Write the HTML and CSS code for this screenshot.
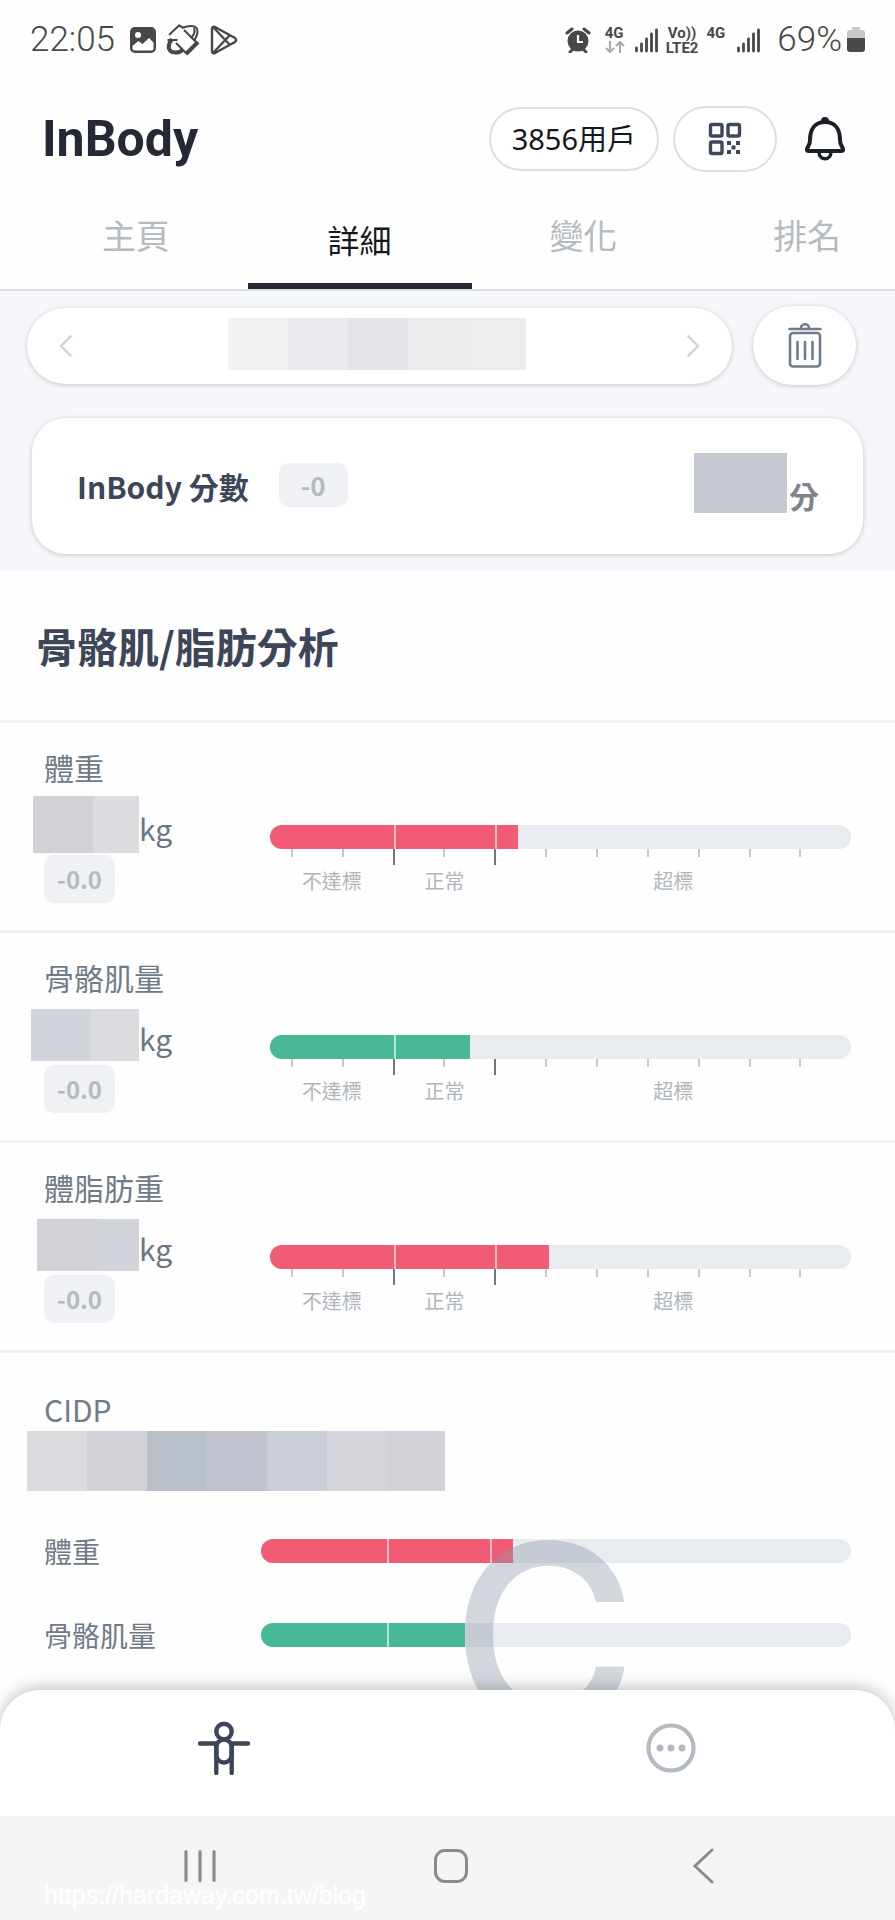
FILE: index.html
```html
<!DOCTYPE html>
<html lang="zh-Hant">
<head>
<meta charset="utf-8">
<meta name="viewport" content="width=device-width, initial-scale=1">
<title>InBody</title>
<link rel="stylesheet" href="styles.css">
</head>
<body>
<div class="app">
  <header class="top">
    <div class="status">
      <div class="status-side">
        <time class="clock">22:05</time>
        <svg class="status-icon" width="26" height="26" viewBox="0 0 26 26" aria-hidden="true"><rect width="26" height="26" rx="5" fill="#484848"/><circle cx="8" cy="8" r="3" fill="#fff"/><path d="M2.500 19l6-5 4 3 6.500-6 4.500 4.500v6q0 2-2 2h-17q-2 0-2-2z" fill="#fff"/></svg>
        <svg class="status-icon" width="34" height="34" viewBox="0 0 34 34" fill="none" stroke="#484848" aria-hidden="true"><path d="M3 12L13 2.500l4 2" stroke-width="2"/><path d="M1.500 17h10" stroke-width="2"/><path d="M6 16c-6 8-3 14 4 13.500 3 0 5-1 6.500-2.500" stroke-width="4"/><path d="M16 5c8-3 16-3 15.500 4 0 3-1 5-3 8" stroke-width="2"/><path d="M28 5c2 5-1 8-3 10" stroke-width="2"/><path d="M18 7l14 14M10 20l11 11" stroke-width="2"/><path d="M32 19L20 31" stroke-width="4"/></svg>
        <svg class="status-icon" width="28" height="30" viewBox="0 0 28 30" fill="none" stroke="#484848" stroke-width="2.400" stroke-linejoin="round" aria-hidden="true"><path d="M2 4q0-3 3-2l20 11q2 2 0 4L5 28q-3 1-3-2zM3 2l17 18M3 28l17-18"/></svg>
      </div>
      <div class="status-side status-right">
        <svg class="alarm" width="26" height="26" viewBox="0 0 26 26" aria-hidden="true"><circle cx="13" cy="14" r="10.500" fill="#484848"/><path d="M2 6l5-4M24 6l-5-4M5 25l3-3M21 25l-3-3" stroke="#484848" stroke-width="3" stroke-linecap="round"/><path d="M13 8v7h5" fill="none" stroke="#fff" stroke-width="2.200"/></svg>
        <div class="network"><span>4G</span><svg width="20" height="12" viewBox="0 0 20 12" fill="none" stroke="#a9a9a9" stroke-width="2" aria-hidden="true"><path d="M5 0v11M1 7l4 4 4-4M15 12V1M11 5l4-4 4 4"/></svg></div>
        <svg width="23" height="25" viewBox="0 0 23 25" stroke="#484848" stroke-width="2.800" stroke-linecap="round" aria-hidden="true"><path d="M1.500 20v3M6.500 16v7M11.500 11v12M16.500 6v17M21.500 2v21"/></svg>
        <div class="network network-volte"><span>Vo))</span><span>LTE2</span></div>
        <div class="network"><span>4G</span></div>
        <svg class="signal-second" width="23" height="25" viewBox="0 0 23 25" stroke="#484848" stroke-width="2.800" stroke-linecap="round" aria-hidden="true"><path d="M1.500 20v3M6.500 16v7M11.500 11v12M16.500 6v17M21.500 2v21"/></svg>
        <span class="clock">69%</span>
        <svg class="battery" width="18" height="26" viewBox="0 0 18 26" aria-hidden="true"><path d="M5 0h8v3h2q3 0 3 3v6H0V6q0-3 3-3h2z" fill="#c8c8c8"/><path d="M0 11h18v11q0 3-3 3H3q-3 0-3-3z" fill="#484848"/></svg>
      </div>
    </div>
    <div class="brand-bar">
      <a class="logo" href="#">InBody</a>
      <div class="actions">
        <button class="pill user-pill" type="button">3856用戶</button>
        <button class="pill qr-pill" type="button" aria-label="QR code"><svg width="34" height="34" viewBox="0 0 34 34" aria-hidden="true"><g fill="none" stroke="#3f475c" stroke-width="3.400"><rect x="2.500" y="2.500" width="11.500" height="11.500" rx="1.500"/><rect x="20" y="2.500" width="11.500" height="11.500" rx="1.500"/><rect x="2.500" y="20" width="11.500" height="11.500" rx="1.500"/></g><path d="M19 19h4v4h-4zM28 19h4v4h-4zM23.500 23.500h4v4h-4zM19 28h4v4h-4zM28 28h4v4h-4z" fill="#3f475c"/></svg></button>
        <button class="bell" type="button" aria-label="通知"><svg width="40" height="44" viewBox="0 0 40 44" fill="none" stroke="#1b1f27" stroke-width="4" stroke-linejoin="round" aria-hidden="true"><path d="M5 23c0-11 5-18 15-18s15 7 15 18c0 6 3 6 3 10q0 1-2 1H4q-2 0-2-1c0-4 3-4 3-10z"/><path d="M14 35c0 9 12 9 12 0" stroke-width="3.400"/><path d="M17 4c0-4 6-4 6 0z" fill="#1b1f27" stroke-width="2"/></svg></button>
      </div>
    </div>
    <nav class="tabs">
      <a class="tab" href="#">主頁</a>
      <a class="tab tab-active" href="#" aria-current="page">詳細</a>
      <a class="tab" href="#">變化</a>
      <a class="tab" href="#">排名</a>
    </nav>
  </header>

  <main class="content">
    <section class="summary">
      <div class="date-row">
        <div class="date-picker">
          <button class="arrow" type="button" aria-label="上一筆"><svg width="14" height="24" viewBox="0 0 14 24" fill="none" stroke="#d2d2d2" stroke-width="2.400"><path d="M12.500 1.500L2 12l10.500 10.500"/></svg></button>
          <div class="mosaic mosaic-date"><i class="tone-1"></i><i class="tone-2"></i><i class="tone-3"></i><i class="tone-4"></i><i class="tone-5"></i></div>
          <button class="arrow" type="button" aria-label="下一筆"><svg width="14" height="24" viewBox="0 0 14 24" fill="none" stroke="#d2d2d2" stroke-width="2.400"><path d="M1.500 1.500L12 12 1.500 22.500"/></svg></button>
        </div>
        <button class="trash" type="button" aria-label="刪除"><svg width="34" height="45" viewBox="0 0 34 45" fill="none" stroke="#6f7c89" stroke-width="2.600" stroke-linecap="round" aria-hidden="true"><path d="M1.500 6h31M13 5c0-5 8-5 8 0"/><rect x="2" y="10" width="30" height="33.500" rx="3"/><path d="M9.500 19v17M17 19v17M24.500 19v17"/></svg></button>
      </div>
      <div class="score-card">
        <h2 class="score-title">InBody 分數</h2>
        <span class="badge badge-score">-0</span>
        <div class="score-value"><div class="mosaic mosaic-score"><i class="tone-9"></i><i class="tone-9"></i></div><span class="score-unit">分</span></div>
      </div>
    </section>

    <h1 class="section-title">骨骼肌/脂肪分析</h1>

    <section class="metric">
      <div class="metric-info">
        <h3 class="metric-name">體重</h3>
        <div class="metric-value"><div class="mosaic-slot"><div class="mosaic mosaic-weight"><i class="tone-6"></i><i class="tone-7"></i></div></div><span class="unit">kg</span></div>
        <span class="badge">-0.0</span>
      </div>
      <div class="chart">
        <div class="track red"><span style="width:21.300%"></span><span style="width:17.500%"></span><span style="width:3.900%"></span></div>
        <div class="ticks"><i></i><i></i><i class="major"></i><i></i><i class="major"></i><i></i><i></i><i></i><i></i><i></i><i></i></div>
        <div class="zones"><span class="under">不達標</span><span class="normal">正常</span><span class="over">超標</span></div>
      </div>
    </section>

    <section class="metric">
      <div class="metric-info">
        <h3 class="metric-name">骨骼肌量</h3>
        <div class="metric-value"><div class="mosaic-slot"><div class="mosaic mosaic-muscle"><i class="tone-8"></i><i class="tone-7"></i></div></div><span class="unit">kg</span></div>
        <span class="badge">-0.0</span>
      </div>
      <div class="chart">
        <div class="track green"><span style="width:21.300%"></span><span style="width:13.200%"></span></div>
        <div class="ticks"><i></i><i></i><i class="major"></i><i></i><i class="major"></i><i></i><i></i><i></i><i></i><i></i><i></i></div>
        <div class="zones"><span class="under">不達標</span><span class="normal">正常</span><span class="over">超標</span></div>
      </div>
    </section>

    <section class="metric">
      <div class="metric-info">
        <h3 class="metric-name">體脂肪重</h3>
        <div class="metric-value"><div class="mosaic-slot"><div class="mosaic mosaic-fat"><i class="tone-6"></i><i class="tone-8"></i></div></div><span class="unit">kg</span></div>
        <span class="badge">-0.0</span>
      </div>
      <div class="chart">
        <div class="track red"><span style="width:21.300%"></span><span style="width:17.500%"></span><span style="width:9.300%"></span></div>
        <div class="ticks"><i></i><i></i><i class="major"></i><i></i><i class="major"></i><i></i><i></i><i></i><i></i><i></i><i></i></div>
        <div class="zones"><span class="under">不達標</span><span class="normal">正常</span><span class="over">超標</span></div>
      </div>
    </section>

    <section class="cidp">
      <h3 class="cidp-title">CIDP</h3>
      <div class="mosaic mosaic-cidp"><i class="tone-7"></i><i class="tone-6"></i><i class="tone-10"></i><i class="tone-11"></i><i class="tone-12"></i><i class="tone-13"></i><i class="tone-6"></i></div>
      <div class="cidp-chart">
        <div class="cidp-row"><span class="cidp-name">體重</span><div class="track red"><span style="width:21.300%"></span><span style="width:17.500%"></span><span style="width:3.900%"></span></div></div>
        <div class="cidp-row"><span class="cidp-name">骨骼肌量</span><div class="track green"><span style="width:21.300%"></span><span style="width:13.200%"></span></div></div>
        <span class="shape-letter">C</span>
      </div>
    </section>
  </main>

  <footer class="bottom">
    <nav class="app-nav">
      <a href="#" aria-label="身體"><svg width="54" height="54" viewBox="0 0 54 54" fill="none" stroke="#3d4659" stroke-width="4.400" stroke-linecap="round" aria-hidden="true"><circle cx="27" cy="10.500" r="7.700"/><path d="M3 22.500h16M35 22.500h16M19.300 24v28M34.700 24v28"/><rect x="19.300" y="18.500" width="15.400" height="23" rx="7.700"/></svg></a>
      <a href="#" aria-label="更多"><svg width="50" height="50" viewBox="0 0 50 50" aria-hidden="true"><circle cx="25" cy="25" r="22.500" fill="none" stroke="#b3bac2" stroke-width="4.200"/><g fill="#b3bac2"><circle cx="14" cy="25" r="3.500"/><circle cx="25" cy="25" r="3.500"/><circle cx="36" cy="25" r="3.500"/></g></svg></a>
    </nav>
    <div class="system-nav">
      <button type="button" aria-label="最近"><svg width="36" height="36" viewBox="0 0 36 36" stroke="#8b8b8b" stroke-width="3.200" stroke-linecap="round"><path d="M4 3.500v29M18 3.500v29M32 3.500v29"/></svg></button>
      <button type="button" aria-label="首頁"><svg width="36" height="36" viewBox="0 0 36 36" fill="none" stroke="#8b8b8b" stroke-width="3"><rect x="2.500" y="2.500" width="31" height="31" rx="9.500"/></svg></button>
      <button type="button" aria-label="返回"><svg width="36" height="36" viewBox="0 0 36 36" fill="none" stroke="#8b8b8b" stroke-width="3" stroke-linecap="round"><path d="M28 2L11 18l17 16"/></svg></button>
      <span class="site-url">https://hardaway.com.tw/blog</span>
    </div>
  </footer>
</div>
</body>
</html>
```

FILE: styles.css
```css
* { box-sizing: border-box; }

body {
  margin: 0;
  background: #fefefe;
  color: #3d4659;
  font-family: "Noto Sans CJK TC", "Noto Sans", sans-serif;
}

h1, h2, h3 { margin: 0; }
a { color: inherit; text-decoration: none; }
button { padding: 0; border: 0; background: none; font: inherit; color: inherit; }
svg { display: block; flex: none; }

.app {
  display: grid;
  grid-template-columns: minmax(0, 1fr);
  grid-template-rows: auto minmax(0, 1fr) auto;
  height: 100vh;
}

/* Status bar */
.status {
  display: flex;
  justify-content: space-between;
  align-items: center;
  height: 80px;
  padding: 0 30px;
  color: #484848;
  font-family: Roboto, sans-serif;
}
.status-side { display: flex; align-items: center; gap: 10px; }
.clock { font-size: 35px; font-weight: 300; line-height: 40px; }
.status-side .clock + .status-icon { margin-left: 5px; }
.network {
  display: flex;
  flex-direction: column;
  height: 28px;
  font-size: 15px;
  font-weight: 700;
  line-height: 15px;
}
.network-volte { margin: 0 -2px; text-align: center; }
.alarm { margin-right: 4px; }
.signal-second { margin: 0 7px 0 2px; }
.status-right .battery { margin-left: -5px; }

/* Brand bar */
.brand-bar {
  display: flex;
  justify-content: space-between;
  align-items: center;
  height: 118px;
  padding: 0 50px 0 42px;
}
.logo {
  color: #242935;
  font: 700 50px/60px Roboto, sans-serif;
}
.actions { display: flex; align-items: center; gap: 14px; }
.pill {
  display: flex;
  justify-content: center;
  align-items: center;
  border: 2px solid #dcdee2;
  border-radius: 33px;
  background: #fff;
}
.user-pill {
  height: 64px;
  padding: 0 21px;
  color: #15181e;
  font: 400 29px/40px "Noto Sans", "Noto Sans CJK TC", sans-serif;
}
.qr-pill { width: 104px; height: 66px; }
.bell { margin-left: 14px; }

/* Tabs */
.tabs {
  display: flex;
  height: 93px;
  padding-left: 24px;
  overflow: hidden;
  border-bottom: 2px solid #dcdee6;
}
.tab {
  flex: 0 0 25vw;
  padding-top: 12px;
  color: #b5bbc1;
  font-size: 34px;
  line-height: 50px;
  text-align: center;
}
.tab-active {
  padding-top: 16px;
  border-bottom: 6px solid #242935;
  color: #15181e;
  font-size: 32px;
}

/* Scrolling content */
.content { overflow-y: auto; scrollbar-width: none; }

.summary {
  padding: 15px 32px 17px;
  background: #f6f7fa;
}
.date-row {
  display: flex;
  align-items: center;
  gap: 21px;
  margin: 0 7px 33px -5px;
}
.date-picker {
  flex: 1;
  display: flex;
  justify-content: space-between;
  align-items: center;
  height: 76px;
  padding: 0 32px;
}
.date-picker, .trash, .score-card {
  background: #fff;
  box-shadow: 0 1px 5px rgba(0, 0, 0, 0.2);
}
.date-picker, .trash { border-radius: 40px; }
.trash {
  display: flex;
  justify-content: center;
  align-items: center;
  width: 103px;
  height: 79px;
}
.score-card {
  display: flex;
  align-items: center;
  height: 136px;
  padding: 0 44px 0 45px;
  border-radius: 34px;
}
.score-title { font-size: 30px; line-height: 44px; }
.score-value { display: flex; align-items: flex-end; gap: 2px; margin: 0 0 6px auto; }
.score-unit { color: #808389; font-size: 30px; font-weight: 700; line-height: 36px; }

/* Masked values */
.mosaic { display: flex; overflow: hidden; }
.mosaic i { flex: 0 0 60px; }
.mosaic-date { width: 298px; height: 52px; margin: 0 6px 4px 0; }
.mosaic-score { width: 93px; height: 60px; }
.mosaic-weight { width: 106px; height: 57px; }
.mosaic-muscle { width: 108px; height: 52px; }
.mosaic-fat { width: 102px; height: 52px; }
.mosaic-cidp { width: 418px; height: 60px; }
.tone-1 { background: #f1f2f4; }
.tone-2 { background: #e9eaee; }
.tone-3 { background: #e3e4e9; }
.tone-4 { background: #ebecee; }
.tone-5 { background: #ecedef; }
.tone-6 { background: #d1d2d8; }
.tone-7 { background: #dbdce0; }
.tone-8 { background: #d1d4da; }
.tone-9 { background: #c6c9d1; }
.tone-10 { background: #b9bfc9; }
.tone-11 { background: #c0c3cd; }
.tone-12 { background: #caced7; }
.tone-13 { background: #d5d6db; }

.badge {
  display: inline-block;
  padding: 0 13px;
  border-radius: 10px;
  background: #f0f1f5;
  color: #b4bac2;
  font-size: 24px;
  font-weight: 700;
  line-height: 48px;
}
.badge-score { margin: 0 0 2px 30px; padding: 0 22px; font-size: 26px; line-height: 44px; }

.section-title {
  padding: 44px 36px 45px;
  border-bottom: 3px solid #f1f1f3;
  font-size: 41px;
  line-height: 60px;
}

/* Metric rows */
.metric {
  display: grid;
  grid-template-columns: 243px 1fr;
  height: 210px;
  padding: 22px 44px 0 27px;
  border-bottom: 3px solid #f1f1f3;
}
.metric-name, .cidp-title, .cidp-name {
  padding-left: 17px;
  color: #717b87;
  font-size: 30px;
  font-weight: 400;
  line-height: 44px;
}
.metric-value { display: flex; align-items: center; height: 59px; margin: 6px 0 1px; }
.mosaic-slot { display: flex; justify-content: flex-end; width: 112px; }
.unit { align-self: flex-end; color: #6b7684; font-size: 30px; line-height: 52px; }
.metric .badge { margin-left: 17px; }
.chart { padding-top: 80px; }

.track {
  display: flex;
  height: 24px;
  overflow: hidden;
  border-radius: 12px;
  background: #e8ebf0;
}
.track span + span { border-left: 2px solid rgba(255, 255, 255, 0.6); }
.red span { background: #f15c74; }
.green span { background: #48b898; }

.ticks { display: flex; height: 16px; padding-left: 3.6%; }
.ticks i { width: 9.08%; height: 8px; border-left: 2px solid #c6cacf; }
.ticks .major { height: 16px; border-color: #6f7883; }
.zones {
  display: flex;
  padding-top: 1px;
  color: #b0b6bd;
  font-size: 20px;
  line-height: 30px;
  text-align: center;
}
.under { width: 21.3%; }
.normal { width: 17.5%; }
.over { flex: 1; }

/* CIDP */
.cidp { padding: 34px 44px 0 27px; }
.cidp-chart { position: relative; margin-top: 38px; }
.cidp-row {
  display: grid;
  grid-template-columns: 234px 1fr;
  align-items: center;
  height: 44px;
  margin-bottom: 40px;
}
.cidp-name { font-size: 28px; }
.shape-letter {
  position: absolute;
  top: -24px;
  left: 424px;
  color: rgba(140, 152, 168, 0.38);
  font: 500 254px/260px Inter, sans-serif;
}

/* Bottom bars */
.bottom { position: relative; }
.app-nav {
  display: grid;
  grid-template-columns: 1fr 1fr;
  height: 126px;
  padding-bottom: 32px;
  place-items: end center;
  border-radius: 40px 40px 0 0;
  background: #fff;
  box-shadow: 0 -4px 14px rgba(40, 50, 60, 0.25);
}
.app-nav a { display: grid; place-items: center; height: 72px; }
.system-nav {
  position: relative;
  display: grid;
  grid-template-columns: repeat(3, 1fr);
  place-items: center;
  height: 104px;
  padding: 0 68px 4px 74px;
  background: #f5f5f8;
}
.site-url {
  position: absolute;
  left: 44px;
  bottom: 10px;
  color: #fff;
  font: 25px/30px "Liberation Sans", sans-serif;
}
```
